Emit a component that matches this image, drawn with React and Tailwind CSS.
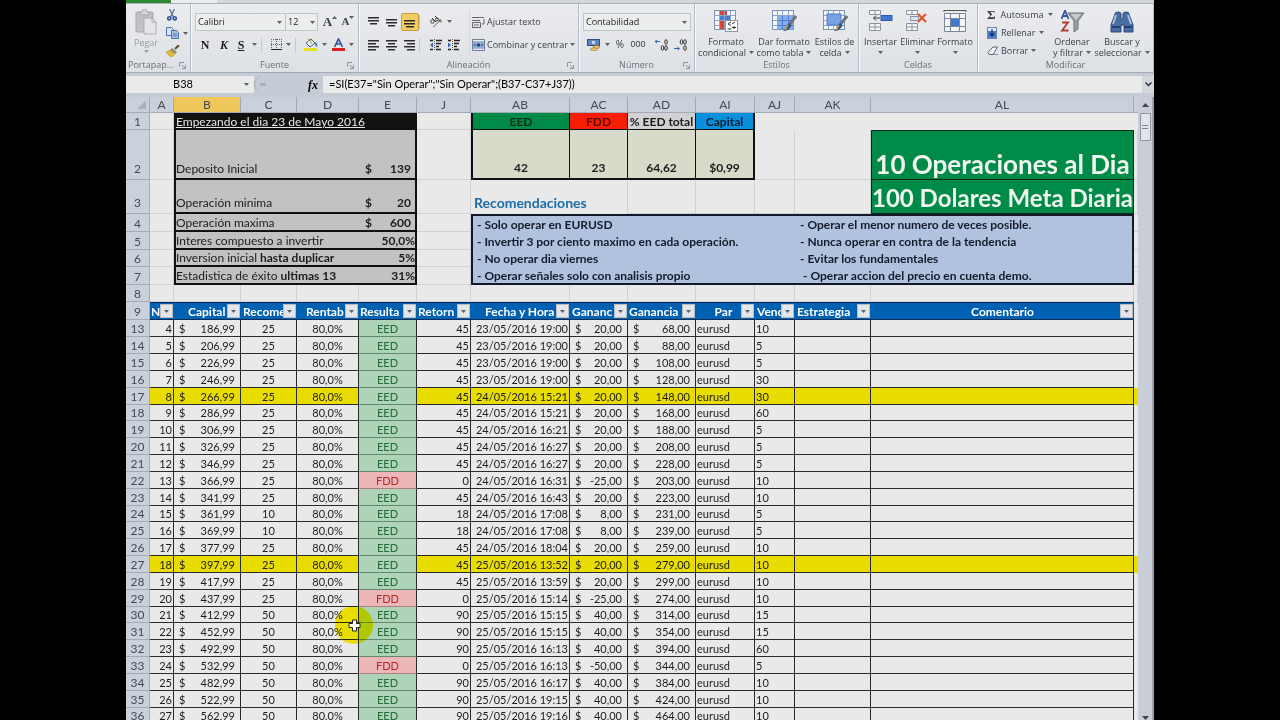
import { useState } from "react";
import clsx from "clsx";

const COLUMNS = [
  { id: "A", width: "w-[24px]" },
  { id: "B", width: "w-[67px]", active: true },
  { id: "C", width: "w-[56px]" },
  { id: "D", width: "w-[62px]" },
  { id: "E", width: "w-[58px]" },
  { id: "J", width: "w-[54px]" },
  { id: "AB", width: "w-[99px]" },
  { id: "AC", width: "w-[58px]" },
  { id: "AD", width: "w-[68px]" },
  { id: "AI", width: "w-[59px]" },
  { id: "AJ", width: "w-[40px]" },
  { id: "AK", width: "w-[76px]" },
  { id: "AL", width: "w-auto" }
];

const FILTERS = [
  { label: "N", align: "text-left pl-px" },
  { label: "Capital", align: "text-left pl-[14px]" },
  { label: "Recome", align: "text-left pl-[2px]" },
  { label: "Rentab", align: "text-left pl-[9px]" },
  { label: "Resulta", align: "text-left pl-px" },
  { label: "Retorn", align: "text-left pl-px" },
  { label: "Fecha y Hora", align: "text-left pl-[14px]" },
  { label: "Gananc", align: "text-left pl-[2px]" },
  { label: "Ganancia", align: "text-left pl-px" },
  { label: "Par", align: "text-center pr-[4px]" },
  { label: "Venc", align: "text-left pl-[2px]" },
  { label: "Estrategia", align: "text-left pl-[2px]" },
  { label: "Comentario", align: "text-center" }
];

// row, n, capital, recom, result, return, date, gain, total, expiry
const TRADES = [
  [13, 4, "186,99", 25, "EED", 45, "23/05/2016 19:00", "20,00", "68,00", 10],
  [14, 5, "206,99", 25, "EED", 45, "23/05/2016 19:00", "20,00", "88,00", 5],
  [15, 6, "226,99", 25, "EED", 45, "23/05/2016 19:00", "20,00", "108,00", 5],
  [16, 7, "246,99", 25, "EED", 45, "23/05/2016 19:00", "20,00", "128,00", 30],
  [17, 8, "266,99", 25, "EED", 45, "24/05/2016 15:21", "20,00", "148,00", 30],
  [18, 9, "286,99", 25, "EED", 45, "24/05/2016 15:21", "20,00", "168,00", 60],
  [19, 10, "306,99", 25, "EED", 45, "24/05/2016 16:21", "20,00", "188,00", 5],
  [20, 11, "326,99", 25, "EED", 45, "24/05/2016 16:27", "20,00", "208,00", 5],
  [21, 12, "346,99", 25, "EED", 45, "24/05/2016 16:27", "20,00", "228,00", 5],
  [22, 13, "366,99", 25, "FDD", 0, "24/05/2016 16:31", "-25,00", "203,00", 10],
  [23, 14, "341,99", 25, "EED", 45, "24/05/2016 16:43", "20,00", "223,00", 10],
  [24, 15, "361,99", 10, "EED", 18, "24/05/2016 17:08", "8,00", "231,00", 5],
  [25, 16, "369,99", 10, "EED", 18, "24/05/2016 17:08", "8,00", "239,00", 5],
  [26, 17, "377,99", 25, "EED", 45, "24/05/2016 18:04", "20,00", "259,00", 10],
  [27, 18, "397,99", 25, "EED", 45, "25/05/2016 13:52", "20,00", "279,00", 10],
  [28, 19, "417,99", 25, "EED", 45, "25/05/2016 13:59", "20,00", "299,00", 10],
  [29, 20, "437,99", 25, "FDD", 0, "25/05/2016 15:14", "-25,00", "274,00", 10],
  [30, 21, "412,99", 50, "EED", 90, "25/05/2016 15:15", "40,00", "314,00", 15],
  [31, 22, "452,99", 50, "EED", 90, "25/05/2016 15:15", "40,00", "354,00", 15],
  [32, 23, "492,99", 50, "EED", 90, "25/05/2016 16:13", "40,00", "394,00", 60],
  [33, 24, "532,99", 50, "FDD", 0, "25/05/2016 16:13", "-50,00", "344,00", 5],
  [34, 25, "482,99", 50, "EED", 90, "25/05/2016 16:17", "40,00", "384,00", 10],
  [35, 26, "522,99", 50, "EED", 90, "25/05/2016 19:15", "40,00", "424,00", 10],
  [36, 27, "562,99", 50, "EED", 90, "25/05/2016 19:16", "40,00", "464,00", 10]
];

const MARKED = [17, 27];

function Caret({ className = "" }) {
  return (
    <svg className={clsx("w-[5px] h-[3px] shrink-0", className)} viewBox="0 0 5 3" fill="#5b5f66">
      <path d="M0 0h5L2.500 3z" />
    </svg>
  );
}

function Divider() {
  return <span className="w-px h-[14px] bg-[#c3c7ce] shrink-0" />;
}

function Group({ label, launcher, className, pad = "pt-[6px]", labelAlign = "text-center", children }) {
  return (
    <section className={clsx("flex flex-col h-full border-r border-[#b4bac4] shadow-[1px_0_0_#f7f8fa]", pad, className)}>
      <div className="flex-1 min-h-0">{children}</div>
      <div className={clsx("relative shrink-0 h-[15px] leading-[15px] text-[#6a7078]", labelAlign)}>
        {label}
        {launcher ? (
          <button aria-label={`Opciones de ${label}`} className="absolute right-[4px] top-[5px]">
            <svg className="w-[7px] h-[7px]" viewBox="0 0 7 7" fill="none" stroke="#8d939c">
              <path d="M.5 5V.5H5M3 3l3 3M6.500 3v3.500H3" />
            </svg>
          </button>
        ) : null}
      </div>
    </section>
  );
}

function Lines({ rows }) {
  return (
    <svg className="w-[12px] h-[12px]" viewBox="0 0 12 12" fill="#2c2c2c">
      {rows.map(([x, y, w]) => <rect key={y} x={x} y={y} width={w} height="1.500" />)}
    </svg>
  );
}

function IconButton({ label, className, children }) {
  return (
    <button aria-label={label} className={clsx("h-[18px] flex items-center justify-center shrink-0", className)}>
      {children}
    </button>
  );
}

function BigButton({ icon, lines, className }) {
  return (
    <button className={clsx("flex flex-col items-center whitespace-nowrap leading-[11px]", className)}>
      {icon}
      <span>{lines[0]}</span>
      <span className="flex items-center gap-[3px] h-[11px]">{lines[1]}<Caret /></span>
    </button>
  );
}

function Clipboard() {
  return (
    <Group label="Portapap..." launcher pad="pt-[2px]" labelAlign="text-left pl-[2px]" className="w-[65px]">
      <div className="flex">
        <button className="w-[40px] pt-[3px] flex flex-col items-center text-[#9a9da2] leading-[11px]">
          <svg className="w-[24px] h-[26px]" viewBox="0 0 24 26">
            <rect x="2" y="3" width="17" height="20" rx="1" fill="#bfc1c4" stroke="#a7a9ad" />
            <path d="M6 3h2q0-3 2.500-3T13 3h2v3H6z" fill="#d5d6d8" stroke="#a7a9ad" />
            <path d="M10 9h8l4 4v12H10z" fill="#e4e5e6" stroke="#a9abae" />
            <path d="M18 9v4h4" fill="none" stroke="#a9abae" />
          </svg>
          <span className="mt-[2px]">Pegar</span>
          <Caret className="mt-[2px] opacity-50" />
        </button>
        <div className="flex flex-col">
          <IconButton label="Cortar" className="w-[12px]">
            <svg className="w-[10px] h-[12px]" viewBox="0 0 10 12" fill="none" stroke="#2f5597">
              <path d="M2.500 0l4 8M7.500 0l-4 8" stroke="#5b6f93" strokeWidth="1.300" />
              <circle cx="2.300" cy="9.300" r="1.600" strokeWidth="1.600" />
              <circle cx="7.700" cy="9.300" r="1.600" strokeWidth="1.600" />
            </svg>
          </IconButton>
          <IconButton label="Copiar" className="gap-[4px]">
            <svg className="w-[13px] h-[12px]" viewBox="0 0 13 12" stroke="#4a6ea9" fill="#dbe7f7">
              <path d="M.5.5h5l2 2v6h-7z" />
              <path d="M5.500 3.500h5l2 2v6h-7z" fill="#a9c4ea" />
              <path d="M7 7h4M7 9h4" stroke="#3f74c4" />
            </svg>
            <Caret />
          </IconButton>
          <IconButton label="Copiar formato" className="w-[14px]">
            <svg className="w-[14px] h-[12px]" viewBox="0 0 14 12">
              <path d="M13 0L9 4" stroke="#5b4a2b" strokeWidth="2" />
              <path d="M6 3l5 4-2 2-5-4z" fill="#8a8f6b" />
              <path d="M4 5l5 4q-2 3-4 3Q2 10 0 7z" fill="#e2b944" stroke="#a98524" strokeWidth=".5" />
            </svg>
          </IconButton>
        </div>
      </div>
    </Group>
  );
}

function FontGroup() {
  return (
    <Group label="Fuente" launcher className="w-[168px]">
      <div className="h-[23px] flex items-center pl-[4px]">
        <label className="relative">
          <select aria-label="Fuente" className="appearance-none block w-[91px] h-[18px] border border-[#c0c5cc] bg-[#eceded] pl-[2px] text-[#222]">
            <option>Calibri</option>
          </select>
          <Caret className="absolute right-[4px] top-[8px]" />
        </label>
        <label className="relative">
          <select aria-label="Tamaño" className="appearance-none block w-[32px] h-[18px] border-y border-r border-[#c0c5cc] bg-[#eceded] pl-[2px] text-[#222]">
            <option>12</option>
          </select>
          <Caret className="absolute right-[3px] top-[8px]" />
        </label>
        <IconButton label="Aumentar tamaño" className="ml-[4px] w-[16px] font-['Liberation_Serif'] font-bold text-[13px]">
          A<Caret className="rotate-180 mb-[8px]" />
        </IconButton>
        <IconButton label="Reducir tamaño" className="ml-[3px] w-[14px] font-['Liberation_Serif'] font-bold text-[11px]">
          A<Caret className="mb-[8px]" />
        </IconButton>
      </div>
      <div className="h-[23px] flex items-center pl-[7px] text-[12px] font-['Liberation_Serif'] text-[#1d1d1d]">
        <IconButton label="Negrita" className="w-[14px] font-black">N</IconButton>
        <IconButton label="Cursiva" className="ml-[5px] w-[14px] font-bold italic">K</IconButton>
        <IconButton label="Subrayado" className="ml-[3px] w-[14px] font-bold underline">S</IconButton>
        <Caret className="mx-[4px]" />
        <Divider />
        <IconButton label="Bordes" className="ml-[8px] w-[12px]">
          <svg className="w-[11px] h-[11px]" viewBox="0 0 11 11" fill="none" stroke="#666" strokeDasharray="1 1">
            <path d="M0 .5h11M.5 0v11M10.500 0v11M5.500 0v11M0 5.500h11" />
            <path d="M0 10.500h11" stroke="#222" strokeDasharray="none" />
          </svg>
        </IconButton>
        <Caret className="mx-[4px]" />
        <Divider />
        <IconButton label="Color de relleno" className="ml-[8px] w-[14px]">
          <svg className="w-[14px] h-[13px]" viewBox="0 0 14 13">
            <path d="M2 5l5-4 4 4-5 4z" fill="#e8eef7" stroke="#4c5f80" />
            <path d="M4 2q1-3 3 1v3" fill="none" stroke="#c49a3a" />
            <path d="M11 4q3 2 2 5-2-1-2-5z" fill="#3b67ad" />
            <rect y="10" width="13" height="3" fill="#e8de2a" />
          </svg>
        </IconButton>
        <Caret className="mx-[4px]" />
        <IconButton label="Color de fuente" className="w-[14px]">
          <svg className="w-[13px] h-[13px]" viewBox="0 0 13 13">
            <path d="M2.500 9L6.500 1l4 8M4 6h5" fill="none" stroke="#31518c" strokeWidth="1.600" />
            <rect y="10" width="13" height="3" fill="#dd2020" />
          </svg>
        </IconButton>
        <Caret className="ml-[4px]" />
      </div>
    </Group>
  );
}

function IndentIcon({ increase }) {
  return (
    <svg className="w-[13px] h-[12px]" viewBox="0 0 13 12">
      <path d="M5.500 0v12" stroke="#555" strokeDasharray="1 1" />
      <path d="M1 1.500h3M7 1.500h6M7 4.500h5M7 7.500h3M1 10.500h3M7 10.500h5" stroke="#222" strokeWidth="1.600" />
      <path d={increase ? "M4 6L1 3.500v5z" : "M1 6l3-2.500v5z"} fill="#2f62b5" />
    </svg>
  );
}

function AlignGroup() {
  return (
    <Group label="Alineación" launcher className="w-[220px]">
      <div className="flex">
        <div className="w-[111px] pl-[6px] border-r border-[#d4d7dc]">
          <div className="h-[23px] flex items-center">
            <IconButton label="Alinear arriba" className="w-[18px]"><Lines rows={[[0, 1, 11], [0, 4, 11], [2, 7, 7]]} /></IconButton>
            <IconButton label="Alinear al medio" className="w-[18px]"><Lines rows={[[0, 3, 11], [0, 6, 11], [2, 9, 7]]} /></IconButton>
            <IconButton label="Alinear abajo" className="w-[18px] rounded-[2px] border border-[#c29b3c] bg-[#f2cb62]"><Lines rows={[[0, 4, 11], [0, 7, 11], [2, 10, 8]]} /></IconButton>
            <Divider />
            <IconButton label="Orientación" className="ml-[10px] gap-[4px]">
              <svg className="w-[13px] h-[12px]" viewBox="0 0 13 12" fill="none" stroke="#444">
                <circle cx="2.500" cy="5.500" r="1.800" />
                <path d="M2 2l4 4M5 0l5 5" />
                <circle cx="7" cy="3.500" r="1.500" />
                <path d="M3 11l8-7M11 4v3M11 4H8" stroke="#7a6a55" />
              </svg>
              <Caret />
            </IconButton>
          </div>
          <div className="h-[23px] flex items-center">
            <IconButton label="Izquierda" className="w-[18px]"><Lines rows={[[0, 1, 11], [0, 4, 8], [0, 7, 11], [0, 10, 8]]} /></IconButton>
            <IconButton label="Centrar" className="w-[18px]"><Lines rows={[[0, 1, 11], [2, 4, 7], [0, 7, 11], [2, 10, 7]]} /></IconButton>
            <IconButton label="Derecha" className="w-[18px]"><Lines rows={[[0, 1, 11], [3, 4, 8], [0, 7, 11], [3, 10, 8]]} /></IconButton>
            <Divider />
            <IconButton label="Disminuir sangría" className="ml-[8px] w-[14px]"><IndentIcon /></IconButton>
            <IconButton label="Aumentar sangría" className="ml-[4px] w-[14px]"><IndentIcon increase /></IconButton>
          </div>
        </div>
        <div className="pl-[2px]">
          <button className="h-[23px] flex items-center gap-[2px] whitespace-nowrap">
            <svg className="w-[13px] h-[12px]" viewBox="0 0 13 12" fill="none" stroke="#666">
              <path d="M0 1.500h12M0 4.500h8M.5 6.500h8v5h-8zM2 9h5M12 3v5h-2" />
            </svg>
            Ajustar texto
          </button>
          <button className="h-[23px] flex items-center gap-[2px] whitespace-nowrap">
            <svg className="w-[13px] h-[12px]" viewBox="0 0 13 12">
              <path d="M.5.5h12v11H.5zM.5 3h12M.5 9h12" fill="#e5ecf6" stroke="#6f7f99" />
              <rect x="1" y="3" width="11" height="6" fill="#8fabdb" />
              <path d="M2 6h2M9 6h2" stroke="#24406f" />
              <circle cx="6.500" cy="6" r="1.700" fill="#24406f" />
            </svg>
            Combinar y centrar <Caret />
          </button>
        </div>
      </div>
    </Group>
  );
}

function NumberGroup() {
  return (
    <Group label="Número" launcher className="w-[116px]">
      <div className="h-[23px] flex items-center pl-[4px]">
        <label className="relative">
          <select aria-label="Formato de número" className="appearance-none block w-[108px] h-[18px] border border-[#c0c5cc] bg-[#eceded] pl-[2px] text-[#222]">
            <option>Contabilidad</option>
          </select>
          <Caret className="absolute right-[4px] top-[8px]" />
        </label>
      </div>
      <div className="h-[23px] flex items-center pl-[8px]">
        <IconButton label="Formato de moneda" className="w-[14px]">
          <svg className="w-[14px] h-[12px]" viewBox="0 0 14 12">
            <rect x=".5" y=".5" width="12" height="6" fill="#5b82bd" stroke="#2f4f86" />
            <circle cx="6.500" cy="3.500" r="1.800" fill="#cddcf2" />
            <ellipse cx="9.500" cy="8" rx="3.500" ry="1.500" fill="#e7c664" stroke="#99742a" strokeWidth=".6" />
            <ellipse cx="7" cy="10.300" rx="3.500" ry="1.500" fill="#e7c664" stroke="#99742a" strokeWidth=".6" />
          </svg>
        </IconButton>
        <Caret className="ml-[4px] mr-[5px]" />
        <button className="w-[10px] text-[10px]">%</button>
        <button className="ml-[5px] w-[16px] font-['Liberation_Sans']">000</button>
        <span className="ml-[3px]"><Divider /></span>
        {["Aumentar decimales", "Disminuir decimales"].map((label, i) => (
          <IconButton key={label} label={label} className="ml-[6px] w-[13px]">
            <svg className="w-[13px] h-[12px]" viewBox="0 0 13 12" fill="none" stroke="#333">
              <path d={i ? "M0 9.500h5M3.500 8l2 1.500-2 1.500" : "M0 2.500h5M2 1L0 2.500 2 4"} stroke="#2f62b5" />
              <ellipse cx="11" cy="3" rx="1.300" ry="2.300" />
              <ellipse cx="11" cy="9" rx="1.300" ry="2.300" />
              <ellipse cx="7.500" cy={i ? 3 : 9} rx="1.300" ry="2.300" />
            </svg>
          </IconButton>
        ))}
      </div>
    </Group>
  );
}

function SheetIcon({ children }) {
  return (
    <svg className="w-[26px] h-[26px]" viewBox="0 2 26 26">
      <rect x="1.500" y="2.500" width="21" height="19" fill="#f4f6f9" stroke="#7a93b8" />
      <path d="M6.500 3v18M11.500 3v18M17.500 3v18M2 7.500h20M2 12.500h20M2 17.500h20" stroke="#8ea5c6" />
      {children}
    </svg>
  );
}

function Brush() {
  return (
    <g>
      <path d="M25 8l-7 9" stroke="#6d747d" strokeWidth="3" />
      <path d="M18 15l2.500 2.500Q18 23 12 23q3-2 3-5z" fill="#34507f" />
      <path d="M17 17l-3 5" stroke="#c59a5b" strokeWidth="1.500" />
    </g>
  );
}

function StylesGroup() {
  return (
    <Group label="Estilos" className="w-[164px]">
      <div className="flex">
        <BigButton className="w-[62px]" lines={["Formato", "condicional"]} icon={
          <SheetIcon>
            <path d="M7 3h4v4H7zM7 13h4v8H7z" fill="#d8452e" />
            <path d="M7 8h4v4H7zM12 8h5v4h-5z" fill="#4a7ed0" />
            <path d="M12 3h2v4h-2z" fill="#d8452e" />
            <rect x="12.500" y="12.500" width="12" height="11" fill="#fff" stroke="#8a97a9" />
            <path d="M18 14l-3 2 3 1.500M14.500 21h4M22 14l-3 2M19 19.500h4M21 18v3" fill="none" stroke="#333" />
          </SheetIcon>
        } />
        <BigButton className="w-[54px]" lines={["Dar formato", "como tabla"]} icon={
          <SheetIcon>
            <rect x="7" y="8" width="15" height="13" fill="#85aeea" />
            <path d="M11.500 8v13M17.500 8v13M7 12.500h15M7 17.500h15" stroke="#4a7ed0" />
            <Brush />
          </SheetIcon>
        } />
        <BigButton className="w-[47px]" lines={["Estilos de", "celda"]} icon={
          <SheetIcon>
            <rect x="5" y="6" width="14" height="11" fill="#75a2e4" stroke="#4a7ed0" />
            <Brush />
          </SheetIcon>
        } />
      </div>
    </Group>
  );
}

function CellBlocks({ children }) {
  return (
    <svg className="w-[26px] h-[26px]" viewBox="0 2 26 26">
      <path d="M1.500 2.500h11v4h-11zM7 2.500v4M1.500 15.500h11v7h-11zM7 15.500v7M1.500 19h11" fill="#f3f4f6" stroke="#8a93a3" />
      {children}
    </svg>
  );
}

function CellsGroup() {
  return (
    <Group label="Celdas" className="w-[119px]">
      <div className="flex pl-[3px]">
        <BigButton className="w-[37px]" lines={["Insertar", ""]} icon={
          <CellBlocks>
            <rect x="13" y="7.500" width="11" height="5" fill="#3f78cf" stroke="#2a5aa8" />
            <path d="M12 10H6M8 7.500L5.500 10 8 12.500" fill="none" stroke="#333" />
          </CellBlocks>
        } />
        <BigButton className="w-[37px]" lines={["Eliminar", ""]} icon={
          <CellBlocks>
            <path d="M5.500 8.500h8v4h-8z" fill="#dfe4ec" stroke="#8a93a3" />
            <path d="M13 6l8 8M21 6l-8 8" stroke="#e2532f" strokeWidth="2.200" />
          </CellBlocks>
        } />
        <BigButton className="w-[38px]" lines={["Formato", ""]} icon={
          <svg className="w-[26px] h-[26px]" viewBox="0 1 26 26">
            <path d="M2 1.500h22M2 0v3M24 0v3" stroke="#555" />
            <path d="M2.500 4.500h21v18h-21z" fill="#f3f4f6" stroke="#7c8799" />
            <path d="M8.500 4v18M17.500 4v18M3 9.500h20M3 17.500h20" stroke="#7c8799" />
            <rect x="9" y="10" width="8" height="7" fill="#3f78cf" />
          </svg>
        } />
      </div>
    </Group>
  );
}

function EditGroup() {
  return (
    <Group label="Modificar" pad="pt-[2px]" className="flex-1">
      <div className="flex pl-[9px]">
        <div className="w-[60px] flex flex-col gap-[1px]">
          <button className="h-[17px] flex items-center gap-[5px]">
            <span className="w-[9px] font-bold text-[13px] leading-[12px] font-['Liberation_Serif']">Σ</span>Autosuma<Caret />
          </button>
          <button className="h-[17px] flex items-center gap-[4px]">
            <svg className="w-[10px] h-[12px]" viewBox="0 0 10 12">
              <rect x=".5" y=".5" width="9" height="11" fill="#e6eefa" stroke="#6c86b0" />
              <rect x="1" y="4" width="8" height="7" fill="#4a7ed0" />
              <path d="M5 2v6M2.500 6L5 9l2.500-3" fill="none" stroke="#1c3766" strokeWidth="1.200" />
            </svg>
            Rellenar<Caret />
          </button>
          <button className="h-[17px] flex items-center gap-[3px]">
            <svg className="w-[11px] h-[10px]" viewBox="0 0 11 10" fill="#f4f4f8" stroke="#59606e">
              <path d="M1 6.500L6 1h4.500L6 8.500H2z" />
              <path d="M6 8.500h5" stroke="#7f8fb5" />
            </svg>
            Borrar<Caret />
          </button>
        </div>
        <BigButton className="w-[50px] pt-[4px]" lines={["Ordenar", "y filtrar"]} icon={
          <svg className="w-[26px] h-[26px]" viewBox="0 2 26 26">
            <path d="M2.500 11L6 2.500 9.500 11M3.500 8h5" fill="none" stroke="#35599c" strokeWidth="1.800" />
            <path d="M3 14.500h6l-6 8h6.500" fill="none" stroke="#b03a34" strokeWidth="1.800" />
            <path d="M9 5h16l-6 8v8l-4 3V13z" fill="#9b9fa5" stroke="#6f7379" />
            <path d="M12 6h10l-5 6z" fill="#c9ccd0" />
          </svg>
        } />
        <BigButton className="w-[50px] pt-[4px]" lines={["Buscar y", "seleccionar"]} icon={
          <svg className="w-[26px] h-[26px]" viewBox="0 1 26 26">
            <path d="M6 5q0-2 3-2t3 2v5h2V5q0-2 3-2t3 2l4 11v7h-9v-7h-3v7H2v-7z" fill="#4a6da3" stroke="#2c477a" />
            <path d="M7 6l-3 9M19 6l3 9" stroke="#a9c0e4" strokeWidth="2" />
            <path d="M3 18h8M15 18h8" stroke="#27406e" strokeWidth="2" />
          </svg>
        } />
      </div>
    </Group>
  );
}

function FormulaBar() {
  const [formula, setFormula] = useState('=SI(E37="Sin Operar";"Sin Operar";(B37-C37+J37))');
  return (
    <div className="h-[24px] shrink-0 flex pt-[3px] pb-[4px] bg-[#c6ccd5] text-[11px]">
      <label className="relative w-[128px] flex">
        <input aria-label="Cuadro de nombres" defaultValue="B38" className="w-full bg-[#e9eaea] pr-[14px] text-center" />
        <Caret className="absolute right-[5px] top-[7px]" />
      </label>
      <div className="w-[69px] flex items-center justify-between rounded-l-full border-l border-[#a5acb8] px-[5px]">
        <span className="w-[6px] h-[3px] rounded-full bg-[#a9b0bb]" />
        <button className="font-['Liberation_Serif'] italic font-bold text-[12px] leading-[14px]">fx</button>
      </div>
      <input aria-label="Barra de fórmulas" value={formula} onChange={(e) => setFormula(e.target.value)} className="flex-1 bg-[#e9eaea] pl-[6px]" />
      <button aria-label="Expandir barra" className="w-[12px] flex items-center justify-center bg-[#d3d8df]">
        <svg className="w-[7px] h-[5px]" viewBox="0 0 7 5" fill="none" stroke="#333" strokeWidth="1.500"><path d="M.5.5l3 3 3-3" /></svg>
      </button>
    </div>
  );
}

function RowHead({ n, className }) {
  return (
    <th scope="row" className={clsx("border-r border-b border-[#a4abb7] bg-[#cbd1da] align-bottom font-normal text-[#444a54]", className)}>
      {n}
    </th>
  );
}

// blank grid cells
function Blank({ count }) {
  return Array.from({ length: count }, (_, i) => <td key={i} className="border-r border-b border-[#cfd1d5]" />);
}

function Money({ value, className }) {
  return <div className={clsx("flex justify-between", className)}><span>$</span><span>{value}</span></div>;
}

function Setting({ label, strong, children }) {
  return (
    <>
      <td colSpan={3} className="border-l-2 border-b-2 border-[#111] bg-[#c2c2c2] align-bottom whitespace-nowrap">
        {label}{strong ? <b> {strong}</b> : null}
      </td>
      <td className="border-r-2 border-b-2 border-[#111] bg-[#c2c2c2] align-bottom text-right font-bold">{children}</td>
    </>
  );
}

function Tips({ left, right, first, last }) {
  const edge = clsx("border-[#111a2c] bg-[#b0c2dd] font-bold whitespace-nowrap text-[#141b2c]", first && "border-t-2", last && "border-b-2");
  return (
    <>
      <td colSpan={5} className={clsx(edge, "border-l-2 pl-[4px]")}>{left}</td>
      <td colSpan={2} className={clsx(edge, "border-r-2 pl-[5px]")}>{right}</td>
      <td className="border-b border-[#cfd1d5]" />
    </>
  );
}

function SummaryRows() {
  const stat = "border-r border-b-2 border-[#111] bg-[#d6dbca] align-bottom pb-[3px]";
  const head = "border-r border-b border-[#111] whitespace-nowrap";
  const banner = "border-l border-r border-b border-[#0b2a18] bg-[#008a48] align-bottom leading-[30px] whitespace-nowrap text-[#f0f6f0]";
  return (
    <>
      <tr className="h-[17px]">
        <RowHead n={1} />
        <Blank count={1} />
        <td colSpan={4} className="bg-[#111] pl-[2px] text-[#e6e6e6] underline">Empezando el dia 23 de Mayo 2016</td>
        <Blank count={1} />
        <th className={clsx(head, "border-l-2 bg-[#008a48] text-[#10301c]")}>EED</th>
        <th className={clsx(head, "bg-[#f81e04] text-[#5c0a04]")}>FDD</th>
        <th className={clsx(head, "bg-[#d2d2d4]")}>% EED total</th>
        <th className={clsx(head, "border-r-2 bg-[#0890dc] text-[#0b1f33]")}>Capital</th>
        <td colSpan={4} />
      </tr>
      <tr className="h-[50px]">
        <RowHead n={2} className="pb-[3px]" />
        <Blank count={1} />
        <Setting label={<span className="block pb-[2px]">Deposito Inicial</span>}><Money value="139" className="pl-[6px] pr-[4px] pb-[2px]" /></Setting>
        <Blank count={1} />
        <th className={clsx(stat, "border-l-2")}>42</th>
        <th className={stat}>23</th>
        <th className={stat}>64,62</th>
        <th className={clsx(stat, "border-r-2")}>$0,99</th>
        <Blank count={2} />
        <th className={clsx(banner, "border-t text-[26px]")}>10 Operaciones al Dia</th>
        <Blank count={1} />
      </tr>
      <tr className="h-[34px]">
        <RowHead n={3} className="pb-[3px]" />
        <Blank count={1} />
        <Setting label={<span className="block pb-[2px]">Operación minima</span>}><Money value="20" className="pl-[6px] pr-[4px] pb-[2px]" /></Setting>
        <Blank count={1} />
        <th colSpan={2} className="border-r border-[#cfd1d5] align-bottom pb-[4px] pl-[3px] text-left text-[14px] text-[#1b6cab]">Recomendaciones</th>
        <Blank count={4} />
        <th className={clsx(banner, "text-[24px]")}>100 Dolares Meta Diaria</th>
        <Blank count={1} />
      </tr>
      <tr className="h-[18px]">
        <RowHead n={4} />
        <Blank count={1} />
        <Setting label="Operación maxima"><Money value="600" className="pl-[6px] pr-[4px]" /></Setting>
        <Blank count={1} />
        <Tips first left="- Solo operar en EURUSD" right="- Operar el menor numero de veces posible." />
      </tr>
      <tr className="h-[18px]">
        <RowHead n={5} />
        <Blank count={1} />
        <Setting label="Interes compuesto a invertir">50,0%</Setting>
        <Blank count={1} />
        <Tips left="- Invertir 3 por ciento maximo en cada operación." right="- Nunca operar en contra de la tendencia" />
      </tr>
      <tr className="h-[17px]">
        <RowHead n={6} />
        <Blank count={1} />
        <Setting label="Inversion inicial" strong="hasta duplicar">5%</Setting>
        <Blank count={1} />
        <Tips left="- No operar dia viernes" right="- Evitar los fundamentales" />
      </tr>
      <tr className="h-[18px]">
        <RowHead n={7} />
        <Blank count={1} />
        <Setting label="Estadistica de éxito" strong="ultimas 13">31%</Setting>
        <Blank count={1} />
        <Tips last left="- Operar señales solo con analisis propio" right={<span className="pl-[3px]">- Operar accion del precio en cuenta demo.</span>} />
      </tr>
      <tr className="h-[17px]">
        <RowHead n={8} />
        <Blank count={14} />
      </tr>
    </>
  );
}

function FilterRow() {
  return (
    <tr className="h-[18px]">
      <RowHead n={9} />
      {FILTERS.map(({ label, align }) => (
        <th key={label} className={clsx("relative overflow-hidden whitespace-nowrap border-y border-[#0b2c55] bg-[#0060b2] text-white", align)}>
          {label}
          <button aria-label={`Filtrar ${label}`} className="absolute right-px top-px w-[13px] h-[14px] flex items-center justify-center border border-[#b9bdc4] bg-[#e4e5e8]">
            <Caret />
          </button>
        </th>
      ))}
      <td />
    </tr>
  );
}

function TradeRow({ trade, short }) {
  const [row, n, capital, recom, result, back, date, gain, total, expiry] = trade;
  const marked = MARKED.includes(row);
  const cell = clsx("border-r border-b border-[#2b2b2b]", marked && "bg-[#e8dc00]");
  const won = result === "EED";
  return (
    <tr className={clsx("text-[11px] leading-[15px]", short ? "h-[16px]" : "h-[17px]")}>
      <RowHead n={row} className="text-[12px]" />
      <td className={clsx(cell, "pr-px text-right")}>{n}</td>
      <td className={cell}><Money value={capital} className="pl-[5px] pr-[5px]" /></td>
      <td className={clsx(cell, "text-center")}>{recom}</td>
      <td className={clsx(cell, "text-center")}>80,0%</td>
      <td className={clsx("border-r border-b border-r-[#2b2b2b] text-center", won ? "border-b-[#5f8a6d] bg-[#afd3b8] text-[#216b35]" : "border-b-[#b07f80] bg-[#edb6b8] text-[#b02a2c]")}>{result}</td>
      <td className={clsx(cell, "pr-px text-right")}>{back}</td>
      <td className={clsx(cell, "pr-px text-right whitespace-nowrap")}>{date}</td>
      <td className={cell}><Money value={gain} className="pl-[5px] pr-[5px]" /></td>
      <td className={cell}><Money value={total} className="pl-[5px] pr-[5px]" /></td>
      <td className={clsx(cell, "pl-px")}>eurusd</td>
      <td className={clsx(cell, "pl-px")}>{expiry}</td>
      <td className={cell} />
      <td className={cell} />
      <td className={marked ? "bg-[#e8dc00]" : ""} />
    </tr>
  );
}

function Sheet() {
  return (
    <table className="w-full table-fixed border-separate border-spacing-0 text-[12px] leading-[15px] text-[#1c1c1c]">
      <colgroup>
        <col className="w-[24px]" />
        {COLUMNS.map((c) => <col key={c.id} className={c.width} />)}
        <col className="w-[4px]" />
      </colgroup>
      <thead>
        <tr className="h-[16px]">
          <th className="border-r border-b border-[#a4abb7] bg-[#cbd1da]">
            <svg className="ml-auto mr-[3px] w-[9px] h-[9px]" viewBox="0 0 9 9" fill="#aab1bc"><path d="M9 0v9H0z" /></svg>
          </th>
          {COLUMNS.map((c) => (
            <th key={c.id} scope="col" className={clsx("border-r border-b border-[#a4abb7] font-normal text-[#444a54]", c.active ? "bg-[#efc75a]" : "bg-[#cbd1da]")}>{c.id}</th>
          ))}
          <th className="border-b border-[#a4abb7] bg-[#cbd1da]" />
        </tr>
      </thead>
      <tbody>
        <SummaryRows />
        <FilterRow />
        {TRADES.map((trade, i) => <TradeRow key={trade[0]} trade={trade} short={i % 6 === 5} />)}
      </tbody>
    </table>
  );
}

function ScrollBar() {
  return (
    <div className="w-[16px] shrink-0 flex flex-col items-center border-r-2 border-[#9ba1ac] bg-[#c8cdd8]">
      <button aria-label="Subir" className="h-[16px] flex items-center">
        <svg className="w-[7px] h-[4px]" viewBox="0 0 7 4" fill="#3f444c"><path d="M0 4l3.500-4L7 4z" /></svg>
      </button>
      <div className="w-[11px] h-[28px] flex flex-col items-center justify-center gap-[2px] border border-[#8f96a3] bg-[#e0e3e9]">
        <span className="w-[6px] h-px bg-[#7c838f]" />
        <span className="w-[6px] h-px bg-[#7c838f]" />
      </div>
      <button aria-label="Bajar" className="mt-auto h-[4px] flex items-start">
        <svg className="w-[7px] h-[4px]" viewBox="0 0 7 4" fill="#3f444c"><path d="M0 0h7L3.500 4z" /></svg>
      </button>
    </div>
  );
}

export default function App() {
  return (
    <div className="h-screen overflow-hidden bg-black px-[126px] font-['Lato',sans-serif]">
      <main className="relative h-full flex flex-col overflow-hidden bg-[#e9e9e9]">
        <div className="h-[4px] shrink-0 flex border-b border-[#aab0ba] bg-[#d3d6db]">
          <span className="w-[45px] bg-[#2f8a2f]" />
          <span className="w-[46px] bg-[#eceded]" />
        </div>
        <div className="h-[69px] shrink-0 flex border-b border-[#a3aab5] bg-linear-to-b from-[#ebecee] to-[#dde0e5] font-['Open_Sans',sans-serif] text-[9px] text-[#3a3d42]">
          <Clipboard />
          <FontGroup />
          <AlignGroup />
          <NumberGroup />
          <StylesGroup />
          <CellsGroup />
          <EditGroup />
        </div>
        <FormulaBar />
        <div className="flex-1 min-h-0 flex overflow-hidden">
          <div className="flex-1 overflow-hidden"><Sheet /></div>
          <ScrollBar />
        </div>

        {/* pointer with its highlight */}
        <span className="absolute left-[209px] top-[606px] w-[38px] h-[38px] rounded-full bg-[#fff200] mix-blend-multiply" />
        <svg className="absolute left-[222px] top-[619px] w-[13px] h-[13px]" viewBox="0 0 13 13">
          <path d="M4.500 1h4v3.500H12v4H8.500V12h-4V8.500H1v-4h3.500z" fill="#fff" stroke="#222" />
        </svg>
      </main>
    </div>
  );
}
